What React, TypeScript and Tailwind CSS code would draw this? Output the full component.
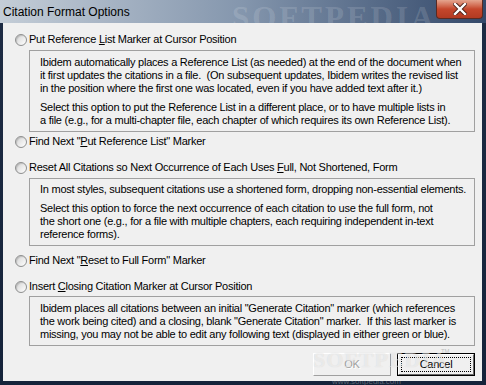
import type { ReactNode } from "react";

const font = { fontFamily: '"Liberation Sans", Arial, sans-serif' };

function Radio({ children }: { children: ReactNode }) {
  return (
    <div className="flex items-center h-[13px]">
      <span className="w-[12px] h-[12px] rounded-full border border-[#8e8f8f] bg-gradient-to-br from-[#d4d4d4] to-white shadow-[inset_1px_1px_1px_rgba(0,0,0,0.15)]" />
      <span className="ml-[2px] leading-[13px] whitespace-nowrap">{children}</span>
    </div>
  );
}

function Box({ children, className = "" }: { children: ReactNode; className?: string }) {
  return (
    <div className={`ml-[14px] mr-[7px] border border-[#a0a0a0] pl-[10px] pr-[2px] pt-[4px] pb-[4px] leading-[13px] whitespace-nowrap ${className}`}>
      {children}
    </div>
  );
}

function U({ children }: { children: ReactNode }) {
  return <span className="underline underline-offset-[1px]">{children}</span>;
}

export default function App() {
  return (
    <div className="relative w-[486px] h-[385px] overflow-hidden bg-gradient-to-b from-[#1e2c44] to-[#15233a] flex flex-col" style={font}>
      {/* title bar */}
      <div className="relative h-[23px] shrink-0 bg-gradient-to-r from-[#c4cdd7] via-[#8496ad] to-[#34496a] flex items-center">
        <span className="ml-[3px] text-[12px] text-black leading-none">Citation Format Options</span>
        <span
          className="absolute left-[232px] top-[2px] text-[31px] font-bold tracking-[3px] text-white/15 leading-none"
          style={{ fontFamily: '"Liberation Serif", serif' }}
        >
          SOFTPEDIA
        </span>
        <div className="absolute right-[3px] top-0 w-[47px] h-[19px] rounded-b-[4px] border border-t-0 border-[#5a2a22] bg-gradient-to-b from-[#e4a58f] via-[#c5472c] to-[#b23a22] flex items-center justify-center">
          <svg width="14" height="12" viewBox="0 0 14 12">
            <path d="M2 1 L12 11 M12 1 L2 11" stroke="#4a2018" strokeWidth="4.2" strokeLinecap="square" />
            <path d="M2 1 L12 11 M12 1 L2 11" stroke="#ffffff" strokeWidth="2.4" strokeLinecap="square" />
          </svg>
        </div>
      </div>

      {/* client */}
      <div className="relative flex-1 ml-[3px] mr-[4px] mb-[4px] bg-[#f0f0f0] text-[11px] tracking-[-0.25px] text-black pl-[12px] pt-[10px] flex flex-col">
        <Radio>
          Put Reference <U>L</U>ist Marker at Cursor Position
        </Radio>
        <Box className="mt-[4px] pt-[5px]">
          <p>
            Ibidem automatically places a Reference List (as needed) at the end of the document when
            <br />
            it first updates the citations in a file.&nbsp; (On subsequent updates, Ibidem writes the revised list
            <br />
            in the position where the first one was located, even if you have added text after it.)
          </p>
          <p className="mt-[6px]">
            Select this option to put the Reference List in a different place, or to have multiple lists in
            <br />
            a file (e.g., for a multi-chapter file, each chapter of which requires its own Reference List).
          </p>
        </Box>
        <div className="mt-[3px]">
          <Radio>
            Find Next "<U>P</U>ut Reference List" Marker
          </Radio>
        </div>
        <div className="mt-[13px]">
          <Radio>
            Reset All Citations so Next Occurrence of Each Uses <U>F</U>ull, Not Shortened, Form
          </Radio>
        </div>
        <Box className="mt-[4px]">
          <p>In most styles, subsequent citations use a shortened form, dropping non-essential elements.</p>
          <p className="mt-[6px]">
            Select this option to force the next occurrence of each citation to use the full form, not
            <br />
            the short one (e.g., for a file with multiple chapters, each requiring independent in-text
            <br />
            reference forms).
          </p>
        </Box>
        <div className="mt-[8px]">
          <Radio>
            Find Next "<U>R</U>eset to Full Form" Marker
          </Radio>
        </div>
        <div className="mt-[13px]">
          <Radio>
            Insert <U>C</U>losing Citation Marker at Cursor Position
          </Radio>
        </div>
        <Box className="mt-[3px] pt-[5px]">
          <p>
            Ibidem places all citations between an initial "Generate Citation" marker (which references
            <br />
            the work being cited) and a closing, blank "Generate Citation" marker.&nbsp; If this last marker is
            <br />
            missing, you may not be able to edit any following text (displayed in either green or blue).
          </p>
        </Box>

        <div className="mt-[7px] mr-[7px] flex justify-end gap-[6px]">
          <button className="w-[78px] h-[23px] border border-t-white border-l-white border-r-[#a0a0a0] border-b-[#a0a0a0] bg-[#f0f0f0] text-[#a0a0a0] [text-shadow:1px_1px_0_#ffffff]">
            OK
          </button>
          <button className="w-[78px] h-[23px] border border-black bg-[#f0f0f0] p-0">
            <div className="w-full h-full border border-t-white border-l-white border-r-[#696969] border-b-[#696969] p-[2px]">
              <div className="w-full h-full border border-dotted border-black flex items-center justify-center">Cancel</div>
            </div>
          </button>
        </div>

        {/* watermark */}
        <span
          className="pointer-events-none absolute left-[310px] top-[326px] text-[22px] font-bold tracking-[1px] text-white/50 leading-none [text-shadow:0_0_1px_rgba(0,0,0,0.12)]"
          style={{ fontFamily: '"Liberation Serif", serif' }}
        >
          SOFTPEDIA
        </span>
        <span className="pointer-events-none absolute left-[438px] top-[325px] text-[6px] leading-none text-[#c0c0c0]">TM</span>
      </div>
      <span className="pointer-events-none absolute left-[332px] top-[378px] text-[8px] leading-none text-white/30">
        www.softpedia.com
      </span>
    </div>
  );
}
